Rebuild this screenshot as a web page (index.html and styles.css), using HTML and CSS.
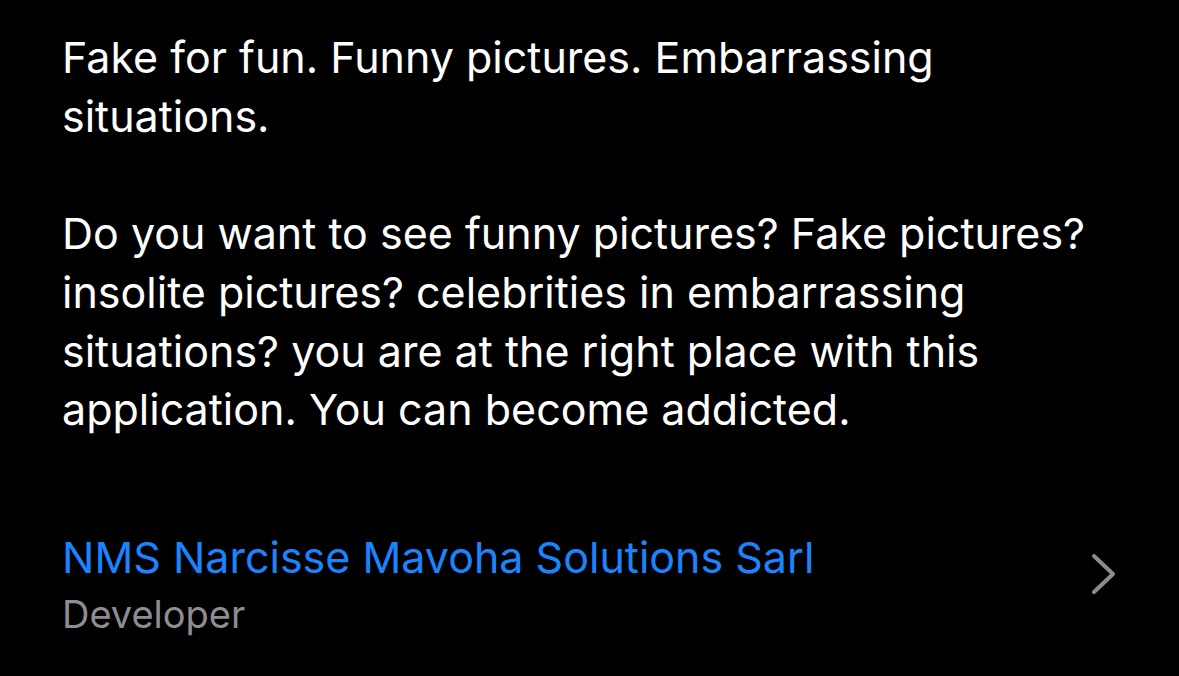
FILE: index.html
```html
<!DOCTYPE html>
<html>
<head>
<meta charset="utf-8">
<link rel="stylesheet" href="styles.css">
</head>
<body>
<main class="page">
  <section class="description">
    <p>Fake for fun. Funny pictures. Embarrassing<br>situations.</p>
    <p>Do you want to see funny pictures? Fake pictures?<br>insolite pictures? celebrities in embarrassing<br>situations? you are at the right place with this<br>application. You can become addicted.</p>
  </section>
  <a class="developer" href="#">
    <div class="dev-text">
      <span class="dev-name">NMS Narcisse Mavoha Solutions Sarl</span>
      <span class="dev-label">Developer</span>
    </div>
    <svg class="chevron" width="30" height="44" viewBox="0 0 30 44"><path d="M7 4 L26 22 L7 40" fill="none" stroke="#8b8b90" stroke-width="4" stroke-linecap="round" stroke-linejoin="round"/></svg>
  </a>
</main>
</body>
</html>
```
FILE: styles.css
```css
html, body {
  margin: 0;
  padding: 0;
  background: #000;
}
.page {
  padding: 28px 62px 0 62px;
  font-family: Inter, "Noto Sans", sans-serif;
  color: #fff;
}
.description p {
  margin: 0 0 58.7px 0;
  font-size: 43px;
  line-height: 58.7px;
}
.description p:last-child {
  margin-bottom: 0;
}
.developer {
  display: flex;
  align-items: flex-start;
  justify-content: space-between;
  text-decoration: none;
  margin-top: 90px;
}
.dev-text {
  display: flex;
  flex-direction: column;
}
.dev-name {
  color: #1a84ff;
  font-size: 43px;
  line-height: 56px;
}
.dev-label {
  color: #8d8d92;
  font-size: 38px;
  line-height: 58px;
}
.chevron {
  margin-top: 23px;
}
```
